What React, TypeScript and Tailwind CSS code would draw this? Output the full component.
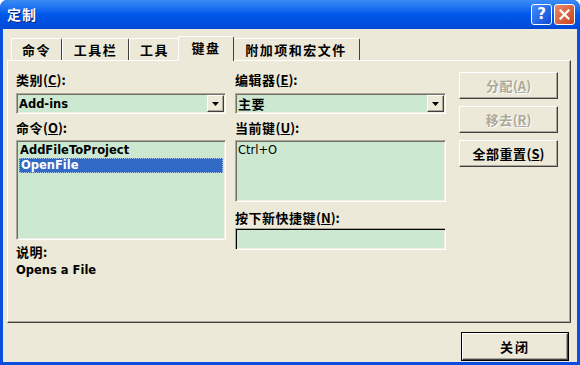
import React from 'react';

const cjk = "font-['Noto_Sans_CJK_SC','Noto_Sans',sans-serif]";
const latin = "font-['DejaVu_Sans','Noto_Sans_CJK_SC',sans-serif]";

const sunken =
    'border border-t-[#aca899] border-l-[#aca899] border-r-white border-b-white shadow-[inset_1px_1px_0_#716f64,inset_-1px_-1px_0_#f1efe2] bg-[#cde8d1]';
const raised =
    'border border-t-white border-l-white border-r-[#404040] border-b-[#404040] shadow-[inset_-1px_-1px_0_#aca899] bg-[#ece9d8]';

const Label: React.FC<{ text: string; mnemonic?: string; className?: string }> = ({ text, mnemonic, className = '' }) => (
    <div className={`h-[14px] leading-[14px] text-[13px] font-bold tracking-[0.5px] text-black whitespace-nowrap ${cjk} ${className}`}>
        {text}
        {mnemonic && (
            <>
                <span className="tracking-normal">(</span>
                <span className="underline tracking-normal">{mnemonic}</span>
                <span className="tracking-normal">):</span>
            </>
        )}
    </div>
);

const ComboBox: React.FC<{ value: string; cjkText?: boolean }> = ({ value, cjkText }) => (
    <div className={`h-[21px] flex items-center ${sunken}`}>
        <div
            className={`flex-1 pl-[2px] leading-[14px] text-black ${
                cjkText ? `${cjk} text-[13px] font-bold tracking-[0.5px]` : `${latin} font-bold text-[11.5px]`
            }`}
        >
            {value}
        </div>
        <div className={`w-[17px] h-[17px] mr-[1px] flex items-center justify-center ${raised}`}>
            <svg width="7" height="4" viewBox="0 0 7 4">
                <path d="M0 0h7L3.5 4z" fill="#000" />
            </svg>
        </div>
    </div>
);

const Button: React.FC<{ label: string; mnemonic?: string; disabled?: boolean; className?: string }> = ({
    label,
    mnemonic,
    disabled,
    className = '',
}) => (
    <div
        className={`h-[27px] flex items-center justify-center text-[13px] font-bold tracking-[0.5px] ${cjk} ${raised} ${
            disabled ? 'text-[#aca899] [text-shadow:1px_1px_0_#fff]' : 'text-black'
        } ${className}`}
    >
        {label}
        {mnemonic && (
            <>
                <span className="tracking-normal">(</span>
                <span className="underline tracking-normal">{mnemonic}</span>
                <span className="tracking-normal">)</span>
            </>
        )}
    </div>
);

const tabs = [
    { label: '命令', w: 'w-[51px]' },
    { label: '工具栏', w: 'w-[67px]' },
    { label: '工具', w: 'w-[51px]' },
    { label: '键盘', w: 'w-[56px]', selected: true },
    { label: '附加项和宏文件', w: 'w-[128px]' },
];

export default function App() {
    return (
        <div className="w-[580px] h-[365px] bg-[#0a4ee0] rounded-t-[7px] flex flex-col overflow-hidden">
            {/* title bar */}
            <div className="h-[29px] shrink-0 flex items-center bg-gradient-to-b from-[#3b8cf6] via-[#0058ea] to-[#0049d6] rounded-t-[7px] pl-[7px] pr-[5px]">
                <div className={`flex-1 text-white text-[14px] font-bold tracking-[1px] [text-shadow:1px_1px_0_#0a1f7a] ${cjk}`}>定制</div>
                <div className="flex gap-[2px]">
                    <div className="w-[21px] h-[21px] rounded-[3px] border border-white bg-gradient-to-br from-[#4a8cfb] to-[#0a48d6] flex items-center justify-center">
                        <span className={`text-white text-[15px] font-bold leading-none ${latin}`}>?</span>
                    </div>
                    <div className="w-[21px] h-[21px] rounded-[3px] border border-white bg-gradient-to-br from-[#ea8a66] to-[#c8401a] flex items-center justify-center">
                        <svg width="11" height="11" viewBox="0 0 11 11">
                            <path d="M1.5 1.5l8 8M9.5 1.5l-8 8" stroke="#fff" strokeWidth="2.2" strokeLinecap="square" />
                        </svg>
                    </div>
                </div>
            </div>

            {/* client area */}
            <div className="flex-1 mx-[3px] mb-[3px] bg-[#ece9d8] flex flex-col">
                {/* tabs */}
                <div className="mt-[7px] ml-[8px] h-[24px] flex items-end">
                    {tabs.map((t) =>
                        t.selected ? (
                            <div
                                key={t.label}
                                className={`relative z-10 -mx-[2px] -mb-px h-[25px] ${t.w} bg-[#ece9d8] border-t border-l border-white border-r border-r-[#404040] rounded-t-[2px] flex items-center justify-center pb-[2px] text-[13px] font-bold tracking-[1.5px] text-black ${cjk}`}
                            >
                                {t.label}
                            </div>
                        ) : (
                            <div
                                key={t.label}
                                className={`h-[22px] ${t.w} border-t border-l border-white border-r border-r-[#404040] rounded-t-[2px] flex items-center justify-center text-[13px] font-bold tracking-[1.5px] text-black ${cjk}`}
                            >
                                {t.label}
                            </div>
                        )
                    )}
                </div>

                {/* tab panel */}
                <div className="ml-[4px] w-[564px] h-[263px] border border-t-white border-l-white border-r-[#404040] border-b-[#404040] shadow-[inset_-1px_-1px_0_#aca899] flex pl-[8px]">
                    {/* left column */}
                    <div className="w-[210px] flex flex-col pt-[12px]">
                        <Label text="类别" mnemonic="C" />
                        <div className="mt-[6px]">
                            <ComboBox value="Add-ins" />
                        </div>
                        <Label text="命令" mnemonic="O" className="mt-[7px]" />
                        <div className={`mt-[5px] h-[100px] pt-[2px] px-[2px] ${sunken}`}>
                            <div className={`h-[15px] leading-[15px] pl-[1px] text-[11.5px] font-bold text-black ${latin}`}>AddFileToProject</div>
                            <div className={`h-[15px] leading-[13px] pl-[1px] text-[11.5px] font-bold text-white bg-[#316ac5] border border-dotted border-[#a9c1ea] ${latin}`}>
                                OpenFile
                            </div>
                        </div>
                        <Label text="说明:" className="mt-[5px]" />
                        <div className={`mt-[4px] h-[14px] leading-[14px] text-[11.5px] font-bold text-black ${latin}`}>Opens a File</div>
                    </div>

                    {/* right column */}
                    <div className="ml-[9px] w-[211px] flex flex-col pt-[12px]">
                        <Label text="编辑器" mnemonic="E" />
                        <div className="mt-[6px]">
                            <ComboBox value="主要" cjkText />
                        </div>
                        <Label text="当前键" mnemonic="U" className="mt-[7px]" />
                        <div className={`mt-[5px] h-[62px] pt-[2px] px-[2px] ${sunken}`}>
                            <div className={`h-[15px] leading-[15px] text-[11.5px] text-black ${latin}`}>Ctrl+O</div>
                        </div>
                        <Label text="按下新快捷键" mnemonic="N" className="mt-[9px]" />
                        <div className="mt-[3px] h-[22px] border border-t-[#aca899] border-l-[#aca899] border-r-white border-b-white shadow-[inset_1px_1px_0_#000,inset_-1px_-1px_0_#f1efe2] bg-[#cde8d1]" />
                    </div>

                    {/* button column */}
                    <div className="ml-[13px] w-[99px] flex flex-col gap-[7px] pt-[11px]">
                        <Button label="分配" mnemonic="A" disabled />
                        <Button label="移去" mnemonic="R" disabled />
                        <Button label="全部重置" mnemonic="S" />
                    </div>
                </div>

                {/* bottom row */}
                <div className="mt-[9px] flex justify-end pr-[8px]">
                    <div className="border border-black">
                        <Button label="关闭" className="w-[106px] h-[25px] tracking-[2px]" />
                    </div>
                </div>
            </div>
        </div>
    );
}
